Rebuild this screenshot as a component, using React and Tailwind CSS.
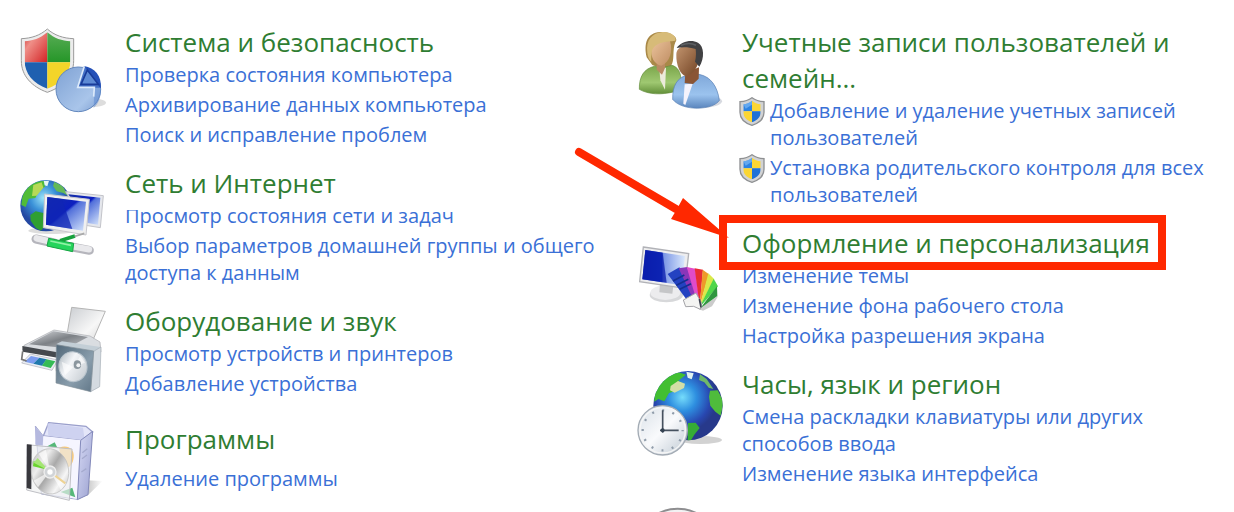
import React from "react";

function SecurityIcon() {
  return (
    <svg viewBox="0 15 330 270" className="h-[90px] w-[110px] shrink-0" aria-hidden="true">
      <defs>
        <linearGradient id="s-red" x1="0" y1="0" x2="1" y2="1"><stop offset="0" stopColor="#c51f1f" /><stop offset=".35" stopColor="#ef8f88" /><stop offset="1" stopColor="#d32224" /></linearGradient>
        <linearGradient id="s-green" x1="0" y1="0" x2="0" y2="1"><stop offset="0" stopColor="#5cae58" /><stop offset="1" stopColor="#259628" /></linearGradient>
        <linearGradient id="s-pie" x1="0" y1="0" x2="1" y2="1"><stop offset="0" stopColor="#7fa2d4" /><stop offset=".7" stopColor="#a9c5ea" /><stop offset="1" stopColor="#7d9fd2" /></linearGradient>
        <clipPath id="s-clip"><path d="M112 37c-22 18-44 26-68 27v58c0 39 26 68 68 84 43-16 69-45 69-84V64c-25-1-48-9-69-27z" /></clipPath>
      </defs>
      <ellipse cx="228" cy="248" rx="60" ry="15" fill="#ddd" />
      <path d="M112 27C91 46 64 55 34 56v66c0 45 31 78 78 95 48-17 79-50 79-95V56c-31-1-58-10-79-29z" fill="#ececec" stroke="#9b9b9b" strokeWidth="3" />
      <g clipPath="url(#s-clip)">
        <path d="M40 30h72v97H40z" fill="url(#s-red)" />
        <path d="M112 30h74v97h-74z" fill="url(#s-green)" />
        <path d="M40 127h72v85H40z" fill="#1f60b0" />
        <path d="M112 127h74v85h-74z" fill="#f3d529" />
      </g>
      <circle cx="205" cy="208" r="67" fill="url(#s-pie)" stroke="#6287bd" strokeWidth="3" />
      <path d="M222 138c33 5 52 30 51 65h-69z" fill="#2450b8" />
      <path d="M223 139l-20 63 50 1-2 60c15-12 22-32 22-56" fill="#5f8bd0" fillOpacity=".55" />
      <path d="M223 139l-20 63h50l-2 28" fill="none" stroke="#dceafb" strokeWidth="5" />
      <path d="M232 150l-19 43h52z" fill="#5d8ad4" stroke="#183b99" strokeWidth="5" />
    </svg>
  );
}

function NetworkIcon() {
  return (
    <svg viewBox="0 -12 330 270" className="h-[90px] w-[110px] shrink-0" aria-hidden="true">
      <defs>
        <radialGradient id="n-globe" cx=".45" cy=".35"><stop offset="0" stopColor="#9be4f8" /><stop offset=".5" stopColor="#3a91d8" /><stop offset="1" stopColor="#2448a2" /></radialGradient>
        <linearGradient id="n-screen" x1="0" y1="0" x2="1" y2="1"><stop offset="0" stopColor="#1730a8" /><stop offset=".45" stopColor="#0c1fc0" /><stop offset=".5" stopColor="#5270da" /><stop offset="1" stopColor="#d7e6fc" /></linearGradient>
        <clipPath id="n-clip"><circle cx="108" cy="107" r="76" /></clipPath>
      </defs>
      <ellipse cx="125" cy="182" rx="70" ry="10" fill="#ddd" />
      <circle cx="108" cy="107" r="77" fill="url(#n-globe)" />
      <g clipPath="url(#n-clip)">
        <path d="M34 105l5-42 33-28 30-2 3 17-17 11-12 23-20 2-9 25z" fill="#50bc38" />
        <path d="M70 45l25-8 5 16-20 24-14 1z" fill="#b7d957" />
        <path d="M61 135l16-11 23 5 17 20-11 17-14 18-15-11-15-21z" fill="#2f9f31" />
        <path d="M133 35l25 13 17 30-15-9-20-5-11-16z" fill="#63b958" />
        <path d="M101 32l16 0-5 17-8-3z" fill="#e6f7f5" />
      </g>
      <path d="M167 65l113 12-9 96-44-7z" fill="#e5e7ec" stroke="#c3c4ca" strokeWidth="3" />
      <path d="M175 73l96 10-7 81-31-5z" fill="url(#n-screen)" />
      <path d="M104 72l134 16-10 107-128-22z" fill="#f0f0f0" stroke="#c8c8ce" strokeWidth="3" />
      <path d="M112 81l116 14-9 87-111-18z" fill="url(#n-screen)" />
      <path d="M112 81l43 6 32 90-79-13z" fill="#1025b4" opacity=".75" />
      <path d="M78 207l54 12M180 230l58 11" stroke="#b5b5bc" strokeWidth="27" strokeLinecap="round" />
      <path d="M80 205l51 12M181 228l56 10" stroke="#e9e9ec" strokeWidth="19" strokeLinecap="round" />
      <path d="M150 212l45-14" stroke="#16a13c" strokeWidth="11" />
      <path d="M116 205l75 15-3 25-77-17z" fill="#25d45c" stroke="#17a544" strokeWidth="3" />
      <path d="M121 213l62 13" stroke="#91f1a5" strokeWidth="5" />
      <path d="M194 199l29-9" stroke="#aaa" strokeWidth="5" />
    </svg>
  );
}

function HardwareIcon() {
  return (
    <svg viewBox="0 12 330 270" className="h-[90px] w-[110px] shrink-0" aria-hidden="true">
      <defs>
        <linearGradient id="h-paper" x1="0" y1="0" x2="1" y2="1"><stop offset="0" stopColor="#c9ccd0" /><stop offset=".6" stopColor="#f7f7f7" /><stop offset="1" stopColor="#d4d4d4" /></linearGradient>
        <linearGradient id="h-top" x1="0" y1="0" x2="1" y2="1"><stop offset="0" stopColor="#d8dade" /><stop offset=".5" stopColor="#7d8186" /><stop offset="1" stopColor="#c3c6cb" /></linearGradient>
        <linearGradient id="h-box" x1="0" y1="0" x2="1" y2="1"><stop offset="0" stopColor="#526879" /><stop offset=".6" stopColor="#899dac" /><stop offset="1" stopColor="#607687" /></linearGradient>
        <linearGradient id="h-cone" x1="0" y1="0" x2="1" y2="1"><stop offset="0" stopColor="#a8b2b9" /><stop offset=".4" stopColor="#f3f5f8" /><stop offset="1" stopColor="#c0c7cd" /></linearGradient>
      </defs>
      <path d="M185 22l101 12-41 95-75-19z" fill="url(#h-paper)" stroke="#b5b5b5" strokeWidth="3" />
      <path d="M132 90l108 18 30 18 3 30-120 15-115-21 4-14z" fill="#dadde1" stroke="#aaacb0" strokeWidth="2" />
      <path d="M130 94l104 17-63 34-114-12z" fill="url(#h-top)" />
      <path d="M37 138l113 20-3 16-109-19z" fill="#45494e" />
      <path d="M61 162l83 18-18 31-91-22z" fill="#e8edf3" stroke="#adadb6" strokeWidth="2" />
      <path d="M63 168l25 5-18 18-26-6z" fill="#7c9df0" />
      <path d="M88 173l22 5-14 19-26-6z" fill="#1f79ad" />
      <path d="M109 178l27 6-14 20-26-7z" fill="#35bb55" />
      <path d="M38 154l-3 24 15 5M140 185v29" stroke="#777" strokeWidth="5" fill="none" />
      <path d="M138 133l18-9 116 17-21 14z" fill="#c3ced6" />
      <path d="M251 154l22-13-4 119-27 15z" fill="#d4dae0" stroke="#a5adb5" strokeWidth="2" />
      <path d="M139 134l112 19-9 122-104-26z" fill="url(#h-box)" stroke="#829099" strokeWidth="2" />
      <ellipse cx="189" cy="200" rx="42" ry="45" fill="url(#h-cone)" stroke="#b9c4cd" strokeWidth="3" transform="rotate(-12 189 200)" />
      <path d="M190 201l-35-16 10 41zM191 201l20-33 14 20z" fill="#fff" opacity=".6" />
      <ellipse cx="202" cy="194" rx="11" ry="13" fill="#8b969e" />
      <circle cx="205" cy="196" r="6" fill="#f1f3f5" />
    </svg>
  );
}

function ProgramsIcon() {
  return (
    <svg viewBox="0 30 330 270" className="h-[90px] w-[110px] shrink-0" aria-hidden="true">
      <defs>
        <linearGradient id="p-side" x1="0" y1="0" x2="1" y2="1"><stop offset="0" stopColor="#d9dcf6" /><stop offset="1" stopColor="#9ba1d0" /></linearGradient>
        <linearGradient id="p-disc" x1="0" y1="0" x2="1" y2="1"><stop offset="0" stopColor="#b4b4b4" /><stop offset=".3" stopColor="#ededed" /><stop offset=".5" stopColor="#a9a9a9" /><stop offset=".75" stopColor="#f6f6f6" /><stop offset="1" stopColor="#b2b2b2" /></linearGradient>
        <linearGradient id="p-shadow" x1="0" y1="0" x2="1" y2="0"><stop offset="0" stopColor="#c4c4c4" /><stop offset="1" stopColor="#fff" /></linearGradient>
      </defs>
      <path d="M228 205l50 2-46 44z" fill="url(#p-shadow)" />
      <path d="M76 42l24 30 114 14-12 176-108-16z" fill="#dfe1f6" stroke="#a7abd2" strokeWidth="3" />
      <path d="M116 32l112 11 20 17-31 25-117-13z" fill="#e4e6f9" stroke="#9a9fcb" strokeWidth="4" />
      <path d="M112 34l3 37 109 13-5-37z" fill="#ced2f0" />
      <path d="M76 44l24 28-2 28-22-2z" fill="#b5b9df" />
      <path d="M100 72l114 13-12 176-106-18z" fill="#f5f5ff" />
      <path d="M212 85l36-27-14 190-32 15z" fill="url(#p-side)" stroke="#8389ba" strokeWidth="3" />
      <path d="M217 122l15-12M216 140l15-11M214 180l15-10" stroke="#a5aace" strokeWidth="4" />
      <path d="M148 107c25-10 46 4 43 29-2 26-20 39-37 31z" fill="#f8c979" />
      <path d="M108 105l26-14 7 14zM152 240l35-13 9 29z" fill="#55b879" />
      <path d="M50 98l136 13-8 154-128-31z" fill="#eef0ef" fillOpacity=".65" stroke="#bfc0c5" strokeWidth="3" />
      <path d="M51 97l14 1-1 134-14-4z" fill="#38383d" />
      <ellipse cx="120" cy="178" rx="56" ry="68" fill="url(#p-disc)" stroke="#bcbcbc" strokeWidth="2" transform="rotate(-7 120 178)" />
      <path d="M120 178L86 125l22-12zM120 178l48 37-15 19zM120 178l-49 28 13 20z" fill="#fff" opacity=".65" />
      <path d="M113 173l-42-26-2 16z" fill="#69d32f" />
      <path d="M118 177l-35-39-12 14z" fill="#a5e575" />
      <path d="M130 187l36 27" stroke="#eed394" strokeWidth="6" />
      <circle cx="120" cy="180" r="18" fill="#d1d4d7" stroke="#eee" strokeWidth="4" />
      <circle cx="120" cy="180" r="8" fill="#fff" />
    </svg>
  );
}

function UsersIcon() {
  return (
    <svg viewBox="0 15 330 270" className="h-[90px] w-[110px] shrink-0" aria-hidden="true">
      <defs>
        <linearGradient id="u-green" x1="0" y1="0" x2="0" y2="1"><stop offset="0" stopColor="#7aa54a" /><stop offset=".6" stopColor="#9fc871" /><stop offset="1" stopColor="#628f39" /></linearGradient>
        <linearGradient id="u-blue" x1="0" y1="0" x2="0" y2="1"><stop offset="0" stopColor="#7fa7d9" /><stop offset=".6" stopColor="#9bc3ee" /><stop offset="1" stopColor="#5b86bd" /></linearGradient>
        <linearGradient id="u-skin" x1="0" y1="0" x2="1" y2="1"><stop offset="0" stopColor="#eac29a" /><stop offset="1" stopColor="#bf8d63" /></linearGradient>
        <linearGradient id="u-brown" x1="0" y1="0" x2="1" y2="1"><stop offset="0" stopColor="#c2946e" /><stop offset="1" stopColor="#704122" /></linearGradient>
      </defs>
      <ellipse cx="212" cy="244" rx="64" ry="20" fill="#d6d9e0" />
      <path d="M50 112c-9-42 0-73 40-76 34-2 58 18 46 31-10 24-1 54-13 71l-26 8-30-11z" fill="#a98948" />
      <path d="M28 208c-1-38 14-62 45-69l25 4 28-7c18 5 27 22 27 46l-19 33c-40 10-78 9-106-7z" fill="url(#u-green)" stroke="#638c3d" strokeWidth="2" />
      <path d="M88 146l20-3-3 66-14-28z" fill="#ecebdc" />
      <path d="M80 126h25v18l-9 20-16-15z" fill="#b98a62" />
      <path d="M64 83c11-16 28-19 56-20 9 31 0 63-26 74-22-5-33-26-30-54z" fill="url(#u-skin)" />
      <path d="M52 98c-5-38 14-59 45-62 25-2 45 14 39 26-26 4-58 1-70 30-2 12-3 23-2 33-6-5-11-15-12-27z" fill="#d7bb78" />
      <path d="M128 238c-1-41 14-66 44-72l35-3c35 7 55 35 61 78-17 29-110 35-140-3z" fill="url(#u-blue)" stroke="#577fb3" strokeWidth="2" />
      <path d="M164 193l24-2-22 64-6-4z" fill="#f5f3fc" />
      <path d="M166 158l41-16-1 34-17 16-25-3z" fill="#8a5535" />
      <path d="M139 104c0-24 23-32 66-22 11 37-6 78-36 87-19-5-31-35-30-65z" fill="url(#u-brown)" />
      <path d="M140 84c14-20 44-26 64-16 19 10 20 48 4 72l-13-15c4-16 3-28 2-38-20-6-38-7-57-3z" fill="#414143" />
      <path d="M153 76c16-7 32-7 45 0" stroke="#5d6063" strokeWidth="5" fill="none" />
    </svg>
  );
}

function PersonalizationIcon() {
  return (
    <svg viewBox="0 63 330 270" className="h-[90px] w-[110px] shrink-0" aria-hidden="true">
      <defs>
        <linearGradient id="d-screen" x1="0" y1="0" x2="1" y2="0"><stop offset="0" stopColor="#0c1fac" /><stop offset=".45" stopColor="#163bc6" /><stop offset=".5" stopColor="#7b96e5" /><stop offset="1" stopColor="#dae8fc" /></linearGradient>
      </defs>
      <ellipse cx="109" cy="270" rx="50" ry="22" fill="#d7d8da" />
      <ellipse cx="106" cy="263" rx="45" ry="22" fill="#ececee" />
      <path d="M90 237l40 6-3 23-39-4z" fill="#c5c6c8" />
      <path d="M40 126l136 20-12 104-135-20z" fill="#eeeeef" stroke="#b1b2b7" strokeWidth="4" />
      <path d="M46 135l119 18-10 88-118-18z" fill="url(#d-screen)" />
      <path d="M46 135l52 8 12 90-73-10z" fill="#0a1cac" opacity=".75" />
      <path d="M205 312l60-40-19 32-27 13z" fill="#cbcbcb" />
      <path d="M113 207l35-20 67 104-31 12z" fill="#2342c1" />
      <path d="M146 190l26-4 39 111-19-8z" fill="#8a36b9" />
      <path d="M170 186l26 5 14 114-9-15z" fill="#e04bca" />
      <path d="M194 190l25 4-10 110z" fill="#e92d35" />
      <path d="M218 194l19 14-28 96z" fill="#ee9a2a" />
      <path d="M235 205l18 18-44 83z" fill="#dbe84a" />
      <path d="M251 221l13 23-56 64z" fill="#50d64b" />
      <path d="M261 244l1 29-51 37z" fill="#2f963f" />
      <path d="M129 228l34-18M139 241l36-18M149 253l34-17" stroke="#132e91" strokeWidth="5" />
      <path d="M160 285l38-21 17 31-4 18-20-9-24 1z" fill="#f4f4f2" stroke="#a4a4a8" strokeWidth="3" />
      <path d="M208 282l5 25" stroke="#3e4350" strokeWidth="5" />
    </svg>
  );
}

function RegionIcon() {
  return (
    <svg viewBox="0 21 330 270" className="h-[90px] w-[110px] shrink-0" aria-hidden="true">
      <defs>
        <radialGradient id="r-globe" cx=".42" cy=".38"><stop offset="0" stopColor="#75dcfb" /><stop offset=".4" stopColor="#2e8fe0" /><stop offset=".8" stopColor="#2847b0" /><stop offset="1" stopColor="#27398b" /></radialGradient>
        <linearGradient id="r-clock" x1="0" y1="0" x2="1" y2="1"><stop offset="0" stopColor="#d8e0e7" /><stop offset=".5" stopColor="#f9fafc" /><stop offset="1" stopColor="#bdc8d2" /></linearGradient>
        <clipPath id="r-clip"><circle cx="174" cy="137" r="104" /></clipPath>
      </defs>
      <ellipse cx="211" cy="240" rx="65" ry="12" fill="#d2d2d2" />
      <circle cx="174" cy="137" r="104" fill="url(#r-globe)" />
      <g clipPath="url(#r-clip)">
        <path d="M73 125c-2-41 22-72 70-89l25 8-23 18 17 10-25 21-20 6-14 25-18-7z" fill="#42bf32" />
        <path d="M122 78l22-15 21 8-3 13-28 14-14-7z" fill="#d3dea7" />
        <path d="M169 35l22 5-6 18-12-5z" fill="#e1f2ee" />
        <path d="M210 43l20 14 20 30-14-4-13-16-16-7z" fill="#6fb96a" />
        <path d="M240 92l23-1 18 34-9 42-16-12-15-18-4-27z" fill="#4fbc3c" />
        <path d="M174 189l23-1 12 16-15 19-13 21-8 2z" fill="#36ac35" />
      </g>
      <circle cx="98" cy="211" r="74" fill="url(#r-clock)" stroke="#a3abb4" strokeWidth="4" />
      <circle cx="98" cy="211" r="68" fill="none" stroke="#f6f6f6" strokeWidth="4" />
      <circle cx="98" cy="211" r="60" fill="none" stroke="#919dab" strokeWidth="7" strokeDasharray="6 25.4" strokeDashoffset="3" />
      <path d="M98 218v-67M90 211h56" stroke="#46515f" strokeWidth="5" fill="none" />
      <circle cx="98" cy="211" r="6" fill="#344252" />
    </svg>
  );
}

function AccessIcon() {
  return (
    <svg viewBox="0 0 330 270" className="h-[90px] w-[110px] shrink-0" aria-hidden="true">
      <circle cx="143" cy="139" r="122" fill="#f2f2f3" stroke="#8e8e90" strokeWidth="6" />
    </svg>
  );
}

function ShieldIcon() {
  return (
    <svg viewBox="0 0 78 87" className="h-[29px] w-[26px] shrink-0" aria-hidden="true">
      <defs>
        <clipPath id="shield-clip"><path d="M39 11c-8 7-16 10-26 11v23c0 15 10 25 26 31 16-6 26-16 26-31V22c-10-1-18-4-26-11z" /></clipPath>
      </defs>
      <path d="M39 2C28 10 17 13 3 14v32c0 19 13 32 36 39 23-7 36-20 36-39V14C61 13 50 10 39 2z" fill="#d2d3d4" stroke="#8e9092" strokeWidth="4" />
      <g clipPath="url(#shield-clip)">
        <path d="M8 8h31v35H8z" fill="#2d83e2" />
        <path d="M39 8h30v35H39z" fill="#fbd633" />
        <path d="M8 43h31v37H8z" fill="#fbd633" />
        <path d="M39 43h30v37H39z" fill="#1d71d7" />
        <path d="M13 21l26-10v12L20 35z" fill="#90c6fa" opacity=".55" />
      </g>
    </svg>
  );
}

function Annotation() {
  return (
    <>
      <span className="pointer-events-none absolute -left-[23px] -top-[10px] h-[55px] w-[447px] border-8 border-[#ff2800]" />
      <svg viewBox="0 0 160 96" className="pointer-events-none absolute -left-[172px] -top-[81px] h-[96px] w-[160px]" aria-hidden="true">
        <path d="M9 8L106 65" stroke="#ff2800" strokeWidth="8" strokeLinecap="round" />
        <path d="M113 54L159 94 101 75l6-10z" fill="#ff2800" />
      </svg>
    </>
  );
}

const leftSections = [
  { title: "Система и безопасность", Icon: SecurityIcon, links: ["Проверка состояния компьютера", "Архивирование данных компьютера", "Поиск и исправление проблем"] },
  { title: "Сеть и Интернет", Icon: NetworkIcon, covered: true, links: ["Просмотр состояния сети и задач", "Выбор параметров домашней группы и общего доступа к данным"] },
  { title: "Оборудование и звук", Icon: HardwareIcon, links: ["Просмотр устройств и принтеров", "Добавление устройства"] },
  { title: "Программы", Icon: ProgramsIcon, spaced: true, links: ["Удаление программы"] },
];

const rightSections = [
  { title: "Учетные записи пользователей и семейн...", Icon: UsersIcon, shield: true, links: ["Добавление и удаление учетных записей пользователей", "Установка родительского контроля для всех пользователей"] },
  { title: "Оформление и персонализация", Icon: PersonalizationIcon, covered: true, marked: true, links: ["Изменение темы", "Изменение фона рабочего стола", "Настройка разрешения экрана"] },
  { title: "Часы, язык и регион", Icon: RegionIcon, links: ["Смена раскладки клавиатуры или других способов ввода", "Изменение языка интерфейса"] },
  { title: "Специальные возможности", Icon: AccessIcon, raised: true, links: [] },
];

function Section({ title, Icon, links, covered, marked, shield, spaced, raised, iconCell }) {
  return (
    <section className={`flex min-h-[101px] items-start ${raised ? "-mt-0.5" : ""}`}>
      <div className={iconCell}><Icon /></div>
      <div className="min-w-0 flex-1 pr-2">
        <h2 className={`relative text-[26px] leading-[36px] text-[#2f7d32] ${covered ? "z-10 -mb-[9px] bg-white pb-[9px]" : ""}`}>
          <a href="#">{title}</a>
          {marked && <Annotation />}
        </h2>
        <ul className={`flex flex-col gap-[3px] text-[20px] leading-[27px] text-[#3a70d6] ${spaced ? "mt-2" : "mt-px"}`}>
          {links.map((link) => (
            <li key={link} className={shield ? "-ml-[3px] flex items-start gap-[5px]" : ""}>
              {shield && <ShieldIcon />}
              <a href="#" className="block">{link}</a>
            </li>
          ))}
        </ul>
      </div>
    </section>
  );
}

export default function App() {
  return (
    <main className="grid h-screen grid-cols-2 items-start gap-4 overflow-hidden bg-white pl-[10px] pt-6 font-['Open_Sans','Noto_Sans',sans-serif]">
      <div className="flex flex-col gap-[17px]">
        {leftSections.map((s) => <Section key={s.title} {...s} iconCell="w-[115px] shrink-0 pt-px" />)}
      </div>
      <div className="flex flex-col gap-[17px]">
        {rightSections.map((s) => <Section key={s.title} {...s} iconCell="w-[112px] shrink-0 pt-px" />)}
      </div>
    </main>
  );
}
